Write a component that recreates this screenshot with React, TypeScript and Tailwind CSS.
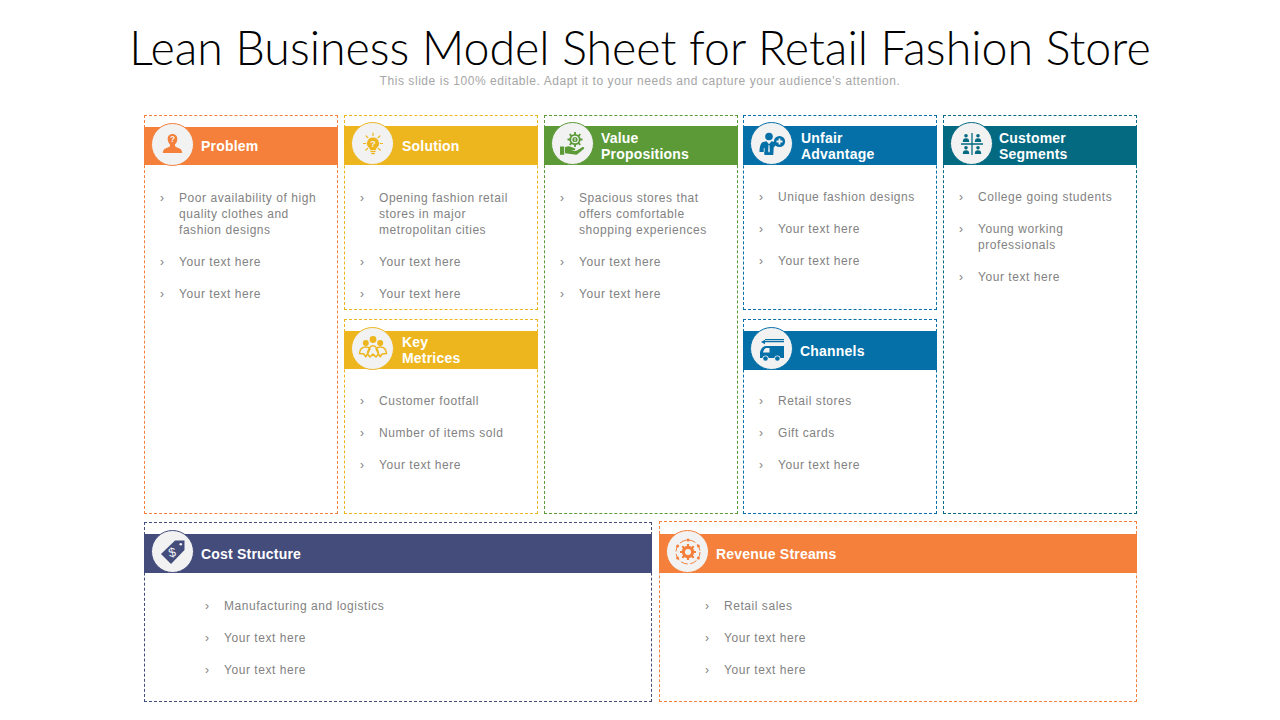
const font = { fontFamily: '"Liberation Sans", Arial, sans-serif' };

function ProblemIcon() {
  return (
    <svg viewBox="0 0 24 24" className="h-[25px] w-[25px]">
      <path fill="#f4803b" d="M12 2c3 0 4.800 2.200 4.600 5.200-.1 2-1 3.600-2.200 4.600v1.400c0 .8 1 1.300 2.600 1.900 2.400.8 4 1.400 4.300 5H2.700c.3-3.600 1.900-4.200 4.300-5 1.600-.6 2.600-1.100 2.600-1.900v-1.400C8.400 10.800 7.500 9.200 7.400 7.200 7.200 4.200 9 2 12 2z" />
      <text x="12" y="10" textAnchor="middle" fontSize="8" fontWeight="700" fill="#f2f2f2" style={font}>?</text>
    </svg>
  );
}

function BulbIcon() {
  return (
    <svg viewBox="0 0 24 24" className="h-[24px] w-[24px]">
      <path fill="#edb61f" d="M12 5.500a6 6 0 0 1 3.600 10.800c-.6.500-.8 1-.8 1.700H9.200c0-.7-.2-1.200-.8-1.700A6 6 0 0 1 12 5.500z" />
      <rect x="9.300" y="18.800" width="5.400" height="1.300" rx=".6" fill="#edb61f" />
      <rect x="10" y="20.800" width="4" height="1.400" rx=".7" fill="#edb61f" />
      <g stroke="#edb61f" strokeWidth="1.200" strokeLinecap="round">
        <path d="M12 1.200v2.300M5.200 4l1.600 1.700M18.800 4l-1.600 1.700M2.500 11.500h2.300M19.200 11.500h2.300M4.800 18l1.800-1.500M19.200 18l-1.800-1.500" />
      </g>
      <text x="12" y="15.200" textAnchor="middle" fontSize="9" fontWeight="700" fill="#f2f2f2" style={font}>?</text>
    </svg>
  );
}

function ValueIcon() {
  return (
    <svg viewBox="0 0 30 30" className="h-[30px] w-[30px]">
      <g stroke="#5c9a38" strokeWidth="1.800">
        <path d="M17 3v15M9.500 10.500h15M11.700 5.200l10.600 10.600M22.300 5.200 11.700 15.800" />
      </g>
      <circle cx="17" cy="10.500" r="5.600" fill="#5c9a38" />
      <circle cx="17" cy="10.500" r="3.800" fill="#f2f2f2" />
      <circle cx="17" cy="10.500" r="2.600" fill="#5c9a38" />
      <rect x="16.500" y="8.800" width="1" height="3.400" fill="#f2f2f2" />
      <path fill="#5c9a38" d="M2 17.500h4.200v8.300H2z" />
      <path fill="#5c9a38" d="M7 18.300c2.400-1.200 4.400-1.200 6.300-.3l3.300 1.300c1.400.6.800 2.300-.7 2l-3.200-.6 3.600 1.300c1.200.3 2-.1 3-.7l4.800-3c1.700-.9 2.900.6 1.600 1.800l-6 4.800c-1 .8-2 1-3.300.7L7 24.200z" />
    </svg>
  );
}

function UnfairIcon() {
  return (
    <svg viewBox="0 0 30 30" className="h-[30px] w-[30px]">
      <circle cx="12" cy="7.500" r="3.800" fill="#0570a8" />
      <path fill="#0570a8" d="M6.300 13 9.500 12.300l2.500 3 2.500-3 3 .7c1 .3 1.700 1 2.100 2.200l-2.900 3.300-.4 7.500H7.500c-.2-1-.3-2-.3-3H2.500c0-4.800 1.200-9.600 3.800-10z" />
      <path fill="#f2f2f2" d="m11.500 15.800.5.800.5-.8.300 6.500-.8 1.500-.8-1.500z" />
      <path stroke="#f2f2f2" strokeWidth=".8" d="M7.200 19v4" />
      <circle cx="22.500" cy="12.500" r="5.600" fill="#0570a8" />
      <path stroke="#f2f2f2" strokeWidth="1.800" d="M22.500 9.500v6M19.500 12.500h6" />
    </svg>
  );
}

function Person({ x, y }: { x: number; y: number }) {
  return (
    <g fill="#046a82" transform={`translate(${x} ${y})`}>
      <circle cx="3.200" cy="1.800" r="1.800" />
      <path d="M0 8c0-2.700.9-3.700 3.200-3.700S6.400 5.300 6.400 8z" />
    </g>
  );
}

function SegmentsIcon() {
  return (
    <svg viewBox="0 0 26 26" className="h-[26px] w-[26px]">
      <path stroke="#046a82" strokeWidth="1.300" d="M13 2v22M2 13h22" />
      <Person x={3.800} y={3} />
      <Person x={15.800} y={3} />
      <Person x={3.800} y={15} />
      <Person x={15.800} y={15} />
    </svg>
  );
}

function MetricsIcon() {
  return (
    <svg viewBox="0 0 30 30" className="h-[30px] w-[30px]">
      <g fill="#edb61f">
        <circle cx="15" cy="6.500" r="3.400" />
        <circle cx="7.800" cy="10" r="3" />
        <circle cx="22.200" cy="10" r="3" />
      </g>
      <g fill="none" stroke="#edb61f" strokeWidth="1.500" strokeLinejoin="round">
        <path d="M1.500 20.500c.3-4.200 2.400-6.500 6.300-6.500 2 0 3.300.6 4.200 1.700L9.500 21l-1.700 2.800L5.800 21z" />
        <path d="M28.500 20.500c-.3-4.200-2.400-6.500-6.300-6.500-2 0-3.300.6-4.200 1.700l2.500 5.300 1.700 2.800 2-2.800z" />
        <path d="M9.500 21c.4-4 2.300-8.200 5.500-8.200s5.100 4.200 5.500 8.200L18 24l-3-3-3 3z" />
      </g>
    </svg>
  );
}

function VanIcon() {
  return (
    <svg viewBox="0 0 28 28" className="h-[28px] w-[28px]">
      <path fill="#0570a8" d="M7 4h19v1.300H7zM3 7l4-2.300v1.200h19v1.300H7v2.100z" />
      <path fill="#0570a8" d="M7.500 11H26v12h-3.400a3.300 3.300 0 0 0-6.400 0h-5.400a3.300 3.300 0 0 0-6.400 0H2v-5.500c.3-3 2.500-6 5.500-6.500z" />
      <path fill="#f2f2f2" d="M7.800 13h3.700v4.500H5c.4-2 1.500-3.800 2.800-4.500z" />
      <circle cx="7.500" cy="23.500" r="2.300" fill="#0570a8" />
      <circle cx="19.400" cy="23.500" r="2.300" fill="#0570a8" />
    </svg>
  );
}

function TagIcon() {
  return (
    <svg viewBox="0 0 30 30" className="h-[30px] w-[30px]">
      <path fill="#444c7c" d="M17 3.500h9.500V13L13 27 3 17z" />
      <circle cx="22.800" cy="7.200" r="1.300" fill="#f2f2f2" />
      <text x="14.300" y="20" textAnchor="middle" fontSize="13" fill="#f2f2f2" transform="rotate(-12 14 16)" style={font}>$</text>
    </svg>
  );
}

function RevenueIcon() {
  return (
    <svg viewBox="0 0 30 30" className="h-[30px] w-[30px]">
      <g stroke="#f4803b" strokeWidth="2.200">
        <path d="M15 7v16M7 15h16M9.300 9.300l11.400 11.400M20.700 9.300 9.300 20.700" />
      </g>
      <circle cx="15" cy="15" r="6.200" fill="#f4803b" />
      <circle cx="15" cy="15" r="3" fill="#f2f2f2" />
      <circle cx="15" cy="15" r="12" fill="none" stroke="#f4803b" strokeWidth="1" strokeDasharray="7 2.500" />
      <g fill="#f4803b">
        <circle cx="15" cy="3" r="1.500" />
        <circle cx="25.400" cy="21" r="1.500" />
        <circle cx="4.600" cy="21" r="1.500" />
        <circle cx="25.400" cy="9" r="1.500" />
        <circle cx="4.600" cy="9" r="1.500" />
      </g>
    </svg>
  );
}

type CardProps = {
  title: string[];
  icon: React.ReactNode;
  items: string[][];
  borderClass: string;
  bandClass: string;
  ringClass: string;
  className?: string;
  topClass?: string;
  bandHeightClass?: string;
  titleClass?: string;
  bodyClass?: string;
  bodyTopClass?: string;
};

function Card({
  title,
  icon,
  items,
  borderClass,
  bandClass,
  ringClass,
  className,
  topClass = "pt-[10px]",
  bandHeightClass = "h-[39px]",
  titleClass = "ml-[7px]",
  bodyClass = "pl-[15px]",
  bodyTopClass = "pt-[25px]",
}: CardProps) {
  return (
    <div className={`border border-dashed bg-white ${topClass} ${borderClass} ${className ?? ""}`}>
      <div className={`-mx-px flex items-center ${bandHeightClass} ${bandClass}`}>
        <div className={`ml-[7px] flex h-[43px] w-[43px] shrink-0 -translate-y-[2px] items-center justify-center rounded-full border bg-[#f2f2f2] ${ringClass}`}>
          {icon}
        </div>
        <div className={`text-[14px] leading-[16px] font-bold tracking-[0.2px] text-white ${titleClass}`}>
          {title.map((line) => (
            <div key={line}>{line}</div>
          ))}
        </div>
      </div>
      <ul className={`flex flex-col gap-[16px] text-[12px] leading-[16px] tracking-[0.55px] text-[#828282] ${bodyTopClass} ${bodyClass}`}>
        {items.map((lines, i) => (
          <li key={i} className="flex">
            <span className="w-[19px] shrink-0">›</span>
            <span>
              {lines.map((line) => (
                <div key={line}>{line}</div>
              ))}
            </span>
          </li>
        ))}
      </ul>
    </div>
  );
}

const orange = { borderClass: "border-[#f4803b]", bandClass: "bg-[#f4803b]", ringClass: "border-[#f4803b]" };
const yellow = { borderClass: "border-[#edb61f]", bandClass: "bg-[#edb61f]", ringClass: "border-[#edb61f]" };
const green = { borderClass: "border-[#5c9a38]", bandClass: "bg-[#5c9a38]", ringClass: "border-[#5c9a38]" };
const blue = { borderClass: "border-[#0570a8]", bandClass: "bg-[#0570a8]", ringClass: "border-[#0570a8]" };
const teal = { borderClass: "border-[#046a82]", bandClass: "bg-[#046a82]", ringClass: "border-[#046a82]" };
const navy = { borderClass: "border-[#444c7c]", bandClass: "bg-[#444c7c]", ringClass: "border-[#444c7c]" };

const yourText = ["Your text here"];

export default function App() {
  return (
    <div className="flex h-[720px] w-[1280px] flex-col items-center overflow-hidden bg-white" style={font}>
      <h1 className="mt-[20px] text-[46.500px] leading-[54px] font-light whitespace-nowrap text-black" style={{ fontFamily: '"Lato", sans-serif' }}>
        Lean Business Model Sheet for Retail Fashion Store
      </h1>
      <p className="text-[12px] leading-[14px] tracking-[0.55px] text-[#a6a6a6]">
        This slide is 100% editable. Adapt it to your needs and capture your audience's attention.
      </p>

      <div className="mt-[27px] ml-px w-[993px]">
        <div className="grid h-[399px] grid-cols-[200px_200px_199px_200px_194px] grid-rows-[195px_195px] gap-y-[9px]">
          <Card
            {...orange}
            className="row-span-2 w-[194px]"
            topClass="pt-[11px]"
            bandHeightClass="h-[38px]"
            title={["Problem"]}
            icon={<ProblemIcon />}
            items={[["Poor availability of high", "quality clothes and", "fashion designs"], yourText, yourText]}
          />
          <Card
            {...yellow}
            className="w-[194px]"
            titleClass="ml-[8px]"
            title={["Solution"]}
            icon={<BulbIcon />}
            items={[["Opening fashion retail", "stores in major", "metropolitan cities"], yourText, yourText]}
          />
          <Card
            {...green}
            className="row-span-2 w-[194px]"
            title={["Value", "Propositions"]}
            icon={<ValueIcon />}
            items={[["Spacious stores that", "offers comfortable", "shopping experiences"], yourText, yourText]}
          />
          <Card
            {...blue}
            className="w-[194px]"
            titleClass="ml-[8px]"
            bodyTopClass="pt-[24px]"
            title={["Unfair", "Advantage"]}
            icon={<UnfairIcon />}
            items={[["Unique fashion designs"], yourText, yourText]}
          />
          <Card
            {...teal}
            className="row-span-2 w-[194px]"
            titleClass="ml-[6px]"
            bodyTopClass="pt-[24px]"
            title={["Customer", "Segments"]}
            icon={<SegmentsIcon />}
            items={[["College going students"], ["Young working", "professionals"], yourText]}
          />
          <Card
            {...yellow}
            className="col-start-2 row-start-2 w-[194px]"
            topClass="pt-[11px]"
            bandHeightClass="h-[38px]"
            titleClass="ml-[8px]"
            bodyTopClass="pt-[24px]"
            title={["Key", "Metrices"]}
            icon={<MetricsIcon />}
            items={[["Customer footfall"], ["Number of items sold"], yourText]}
          />
          <Card
            {...blue}
            className="col-start-4 row-start-2 w-[194px]"
            topClass="pt-[11px]"
            bodyTopClass="pt-[23px]"
            title={["Channels"]}
            icon={<VanIcon />}
            items={[["Retail stores"], ["Gift cards"], yourText]}
          />
        </div>

        <div className="mt-[7px] flex items-end gap-[7px]">
          <Card
            {...navy}
            className="h-[180px] w-[508px]"
            topClass="pt-[11px]"
            bodyClass="pl-[60px]"
            title={["Cost Structure"]}
            icon={<TagIcon />}
            items={[["Manufacturing and logistics"], yourText, yourText]}
          />
          <Card
            {...orange}
            className="h-[181px] w-[478px]"
            topClass="pt-[12px]"
            bodyClass="pl-[45px]"
            title={["Revenue Streams"]}
            icon={<RevenueIcon />}
            items={[["Retail sales"], yourText, yourText]}
          />
        </div>
      </div>
    </div>
  );
}
